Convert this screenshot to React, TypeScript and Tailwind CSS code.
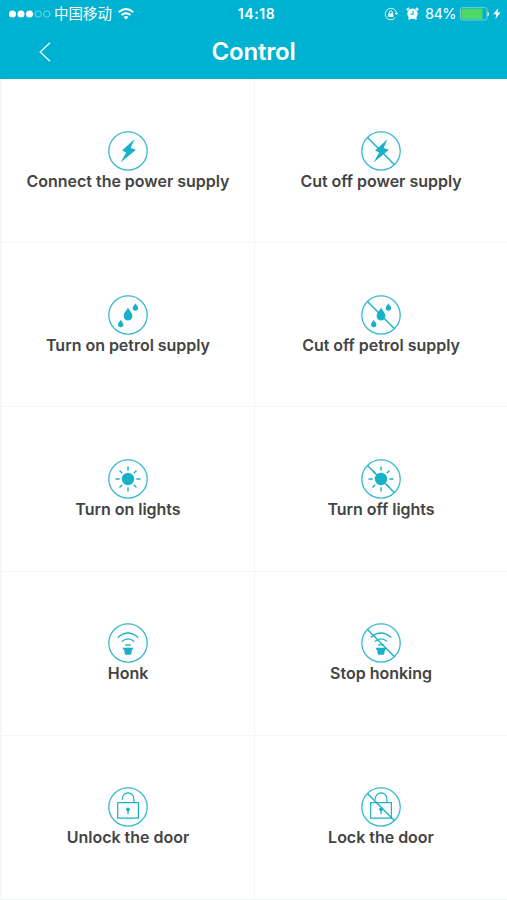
import type { ReactNode } from "react";

interface Control {
  label: string;
  icon: ReactNode;
  off?: boolean;
}

const Bolt = () => (
  <path fill="currentColor" d="M26.4 8.3 14 19.6l4.2 1.9-5.6 9.9L28 18.8l-5.3-1.7z" />
);

const Drops = () => (
  <g fill="currentColor">
    <path d="M20 12.5c1 2.8 4.4 5.2 4.4 8.6a4.4 4.4 0 0 1-8.8 0c0-3.4 3.4-5.8 4.4-8.6z" />
    <path d="M27.4 8.2c.6 1.7 2.7 3 2.7 4.9a2.7 2.7 0 0 1-5.4 0c0-1.9 2.1-3.2 2.7-4.9z" />
    <path d="M12.7 24.7c.6 1.7 2.7 3 2.7 4.9a2.7 2.7 0 0 1-5.4 0c0-1.9 2.1-3.2 2.7-4.9z" />
  </g>
);

const Sun = () => (
  <>
    <circle cx="20" cy="20" r="6.2" fill="currentColor" />
    <path
      fill="none"
      stroke="currentColor"
      strokeWidth="1.4"
      d="M20 7.5v4.2M20 28.3v4.2M7.5 20h4.2M28.3 20h4.2M11.5 11.5l2.7 2.7M25.8 25.8l2.7 2.7M28.5 11.5l-2.7 2.7M14.2 25.8l-2.7 2.7"
    />
  </>
);

const Horn = () => (
  <>
    <path
      fill="none"
      stroke="currentColor"
      strokeWidth="1.3"
      d="M9.7 14.5Q20 5.5 30.3 14.5M13.9 18.4Q20 13.2 26.1 18.4M17.3 22.4Q20 20.8 22.7 22.4"
    />
    <path fill="currentColor" d="M14.9 24.8h10.3v1.8h-1.1L23 31.8h-6l-1-5.2h-1.1z" />
  </>
);

const Lock = () => (
  <>
    <path
      fill="none"
      stroke="currentColor"
      strokeWidth="1.2"
      d="M9.7 15.7h20.7v15.4H9.7zM14.3 12.7v-1a5.8 5.8 0 0 1 11.6 0v4"
    />
    <circle cx="20" cy="22.3" r="1.9" fill="currentColor" />
    <path stroke="currentColor" strokeWidth="1.3" d="M20 23v4.2" />
  </>
);

const controls: Control[] = [
  { label: "Connect the power supply", icon: <Bolt /> },
  { label: "Cut off power supply", icon: <Bolt />, off: true },
  { label: "Turn on petrol supply", icon: <Drops /> },
  { label: "Cut off petrol supply", icon: <Drops />, off: true },
  { label: "Turn on lights", icon: <Sun /> },
  { label: "Turn off lights", icon: <Sun />, off: true },
  { label: "Honk", icon: <Horn /> },
  { label: "Stop honking", icon: <Horn />, off: true },
  { label: "Unlock the door", icon: <Lock /> },
  { label: "Lock the door", icon: <Lock />, off: true },
];

const StatusBar = () => (
  <div className="grid h-[27px] grid-cols-3 items-center text-[14px] leading-none">
    <div className="flex items-center pl-[9px]">
      <svg width="42" height="8" viewBox="0 0 42 8">
        <g fill="#fff">
          <circle cx="3.5" cy="4" r="3.5" />
          <circle cx="12" cy="4" r="3.5" />
          <circle cx="20.5" cy="4" r="3.5" />
        </g>
        <g fill="none" stroke="#9be0ec" strokeWidth=".8">
          <circle cx="29.2" cy="4" r="3.2" />
          <circle cx="37.7" cy="4" r="3.2" />
        </g>
      </svg>
      <span className="ml-[3px] pt-0.5 text-[14.5px]">中国移动</span>
      <svg className="ml-[6px]" width="16" height="12" viewBox="0 0 16 12">
        <g fill="none" stroke="#fff" strokeWidth="1.9">
          <path d="M.8 4.2Q8-2 15.2 4.2" />
          <path d="M3.5 7.1Q8 3.3 12.5 7.1" />
        </g>
        <path fill="#fff" d="M5.5 8.9Q8 7 10.5 8.9L8 11.5z" />
      </svg>
    </div>

    <div className="pl-[6px] text-center font-semibold tracking-[0.6px]">14:18</div>

    <div className="flex items-center justify-end pr-[6px]">
      {/* Rotation lock */}
      <svg width="14" height="14" viewBox="0 0 14 14">
        <path fill="none" stroke="#d9f4f8" d="M11.4 10.5A5.7 5.7 0 1 1 12.5 6" />
        <path fill="#fff" d="M10.7 5.9h3.3L12.4 8z" />
        <path fill="#fff" d="M4.3 6.4h5V10h-5z" />
        <path fill="none" stroke="#fff" d="M5.3 6.5V5.3a1.5 1.5 0 0 1 3 0v1.2" />
      </svg>
      {/* Alarm */}
      <svg className="ml-2" width="13" height="13" viewBox="0 0 13 13">
        <circle cx="6.5" cy="6.8" r="5.2" fill="#fff" />
        <path stroke="#fff" strokeWidth="2" d="M.8 3 3 1M12.2 3 10 1M2.7 12.3l1.5-2M10.3 12.3l-1.5-2" />
        <path fill="none" stroke="#00b2d2" strokeWidth="1.1" d="M7 3.8v3.4H4.2" />
      </svg>
      <span className="ml-[6px] pt-px text-[14.5px] tracking-[-0.5px]">84%</span>
      <svg className="ml-[4px]" width="29" height="14" viewBox="0 0 29 14">
        <rect x=".5" y=".7" width="26.5" height="12.3" rx="1.8" fill="none" stroke="#80cfca" />
        <rect x="1.5" y="1.7" width="21" height="10.3" rx=".8" fill="#4cd964" />
        <path fill="#d9f4f8" d="M27.5 4.7c2 .4 2 4 0 4.4z" />
      </svg>
      <svg className="ml-[4px]" width="8" height="11" viewBox="0 0 8 11">
        <path fill="#fff" d="M5.3 0 .3 6.2h3L2.5 11l5-6.5H4.6z" />
      </svg>
    </div>
  </div>
);

const ControlCell = ({ label, icon, off }: Control) => (
  <button className="flex flex-col items-center border-r border-b border-[#f2f6f7] pt-[51.5px]">
    <svg className="shrink-0 text-[#18b1c9]" width="40" height="40" viewBox="0 0 40 40">
      <circle cx="20" cy="20" r="19.2" fill="none" stroke="#36bad0" strokeWidth="1.3" />
      {icon}
      {off && <path stroke="currentColor" strokeWidth="1.4" d="M6.5 6.5 33.5 33.8" />}
    </svg>
    <span className="text-[16px] leading-5 font-semibold tracking-[-0.02px] whitespace-nowrap">
      {label}
    </span>
  </button>
);

export default function App() {
  return (
    <div className="flex h-[900px] w-[507px] flex-col overflow-hidden bg-white font-['Inter','Noto_Sans_CJK_SC',sans-serif] text-[#444]">
      <header className="h-[79px] shrink-0 bg-[#00b2d2] text-white">
        <StatusBar />
        <div className="grid h-[49px] grid-cols-3 items-center">
          <svg className="ml-[39px]" width="12" height="20" viewBox="0 0 12 20">
            <path fill="none" stroke="#e8fafc" strokeWidth="1.3" d="M11 .8 1.2 10 11 19.2" />
          </svg>
          <h1 className="text-center text-[24px] font-semibold tracking-[-0.2px]">Control</h1>
        </div>
      </header>

      <main className="-mr-px grid min-h-0 flex-1 grid-cols-2 grid-rows-5 border-l-2 border-[#f5f8f9]">
        {controls.map((control) => (
          <ControlCell key={control.label} {...control} />
        ))}
      </main>
    </div>
  );
}
